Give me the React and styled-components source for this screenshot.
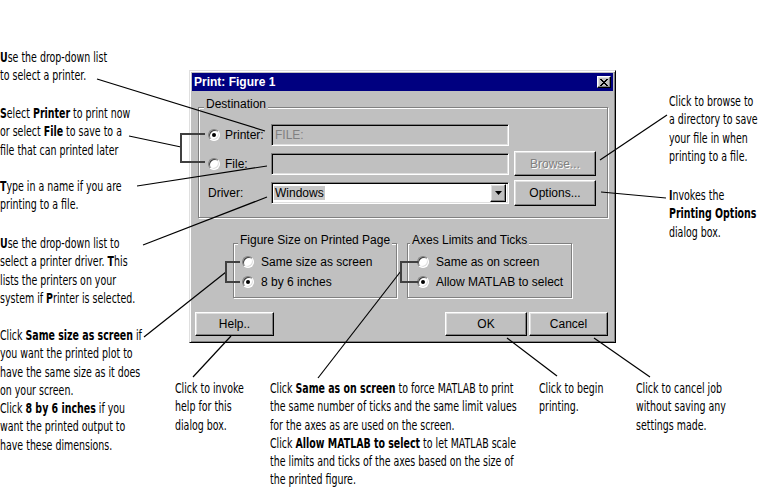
import React from "react";
import styled, { createGlobalStyle, css } from "styled-components";

const GlobalStyle = createGlobalStyle`
  html, body {
    margin: 0;
    padding: 0;
    background: #fff;
  }
`;

const raised = css`
  border: 1px solid;
  border-color: #fff #000 #000 #fff;
  box-shadow: inset -1px -1px #808080, inset 1px 1px #dfdfdf;
`;

const sunken = css`
  border: 1px solid;
  border-color: #808080 #fff #fff #808080;
  box-shadow: inset 1px 1px #000, inset -1px -1px #dfdfdf;
`;

const Page = styled.div`
  position: relative;
  width: 765px;
  height: 501px;
  box-sizing: border-box;
  padding: 70px 0 0 189px;
  overflow: hidden;
  background: #fff;
`;

const Window = styled.div`
  width: 427px;
  height: 273px;
  box-sizing: border-box;
  padding: 2px;
  display: flex;
  flex-direction: column;
  background: #c0c0c0;
  border: 1px solid;
  border-color: #dfdfdf #000 #000 #dfdfdf;
  box-shadow: inset 1px 1px #fff, inset -1px -1px #808080;
  font-family: "Liberation Sans", Arial, sans-serif;
  font-size: 12px;
  color: #000;
`;

const TitleBar = styled.div`
  height: 18px;
  flex: none;
  display: flex;
  align-items: center;
  justify-content: space-between;
  padding: 0 2px 0 2px;
  background: #000080;
  color: #fff;
  font-weight: bold;
  font-size: 12px;
`;

const CloseBox = styled.span`
  width: 14px;
  height: 12px;
  box-sizing: border-box;
  display: flex;
  align-items: center;
  justify-content: center;
  background: #c0c0c0;
  ${raised}
`;

const Body = styled.div`
  flex: 1;
  display: flex;
  flex-direction: column;
  padding: 16px 0 0 0;
`;

const Group = styled.div`
  display: flex;
  flex-direction: column;
  flex: none;
  min-width: 0;
  border: 1px solid #808080;
  box-shadow: inset 1px 1px #fff, 1px 1px #fff;
  padding: ${(p) => p.$pad};
  margin: ${(p) => p.$margin || "0"};
  width: ${(p) => (p.$width ? `${p.$width}px` : "auto")};
  box-sizing: border-box;
`;

const Legend = styled.div`
  align-self: flex-start;
  height: 14px;
  line-height: 14px;
  margin: -11px 0 0 ${(p) => p.$indent}px;
  padding: 0 2px;
  background: #c0c0c0;
  white-space: nowrap;
`;

const DestGrid = styled.div`
  display: grid;
  grid-template-columns: 63px 238px 87px;
  grid-auto-rows: 29px;
  align-items: center;
  margin-top: 9px;
`;

const Choice = styled.label`
  display: flex;
  align-items: center;
  gap: ${(p) => p.$gap || 5}px;
  height: 20px;
  white-space: nowrap;
`;

const Radio = styled.span`
  width: 12px;
  height: 12px;
  flex: none;
  box-sizing: border-box;
  border-radius: 50%;
  display: flex;
  align-items: center;
  justify-content: center;
  background: #fff;
  border: 1px solid;
  border-color: #808080 #fff #fff #808080;
  box-shadow: inset 1px 1px #404040, inset -1px -1px #dfdfdf;

  &::after {
    content: "";
    width: 4px;
    height: 4px;
    border-radius: 50%;
    background: ${(p) => (p.$checked ? "#000" : "transparent")};
  }
`;

const Field = styled.div`
  height: 22px;
  box-sizing: border-box;
  display: flex;
  align-items: center;
  padding: 0 3px;
  background: ${(p) => (p.$disabled ? "#c0c0c0" : "#fff")};
  color: ${(p) => (p.$disabled ? "#808080" : "#000")};
  ${sunken}
`;

const Combo = styled(Field)`
  padding: 0 2px 0 2px;
  justify-content: space-between;
`;

const Selected = styled.span`
  background: #c8c8c8;
  padding: 0 1px;
`;

const DropButton = styled.span`
  width: 16px;
  height: 18px;
  box-sizing: border-box;
  display: flex;
  align-items: center;
  justify-content: center;
  background: #c0c0c0;
  ${raised}
`;

const Button = styled.div`
  width: ${(p) => p.$width}px;
  height: ${(p) => p.$height || 24}px;
  box-sizing: border-box;
  display: flex;
  align-items: center;
  justify-content: center;
  justify-self: end;
  background: #c0c0c0;
  color: ${(p) => (p.$disabled ? "#808080" : "#000")};
  text-shadow: ${(p) => (p.$disabled ? "1px 1px #fff" : "none")};
  ${raised}
`;

const LowerRow = styled.div`
  display: flex;
  justify-content: center;
  gap: 10px;
  margin-top: 25px;
`;

const ChoiceList = styled.div`
  display: flex;
  flex-direction: column;
  margin-top: 5px;
`;

const ButtonRow = styled.div`
  display: flex;
  align-items: center;
  margin: 14px 5px 0 3px;
`;

const Spacer = styled.div`
  flex: 1;
`;

const ButtonPair = styled.div`
  display: flex;
  gap: 2px;
`;

/* callouts and leader lines of the figure */

const Note = styled.div`
  position: absolute;
  left: ${(p) => p.$x}px;
  top: ${(p) => p.$y}px;
  transform: scaleX(0.75);
  transform-origin: 0 0;
  font-family: "DejaVu Sans Condensed", "DejaVu Sans", sans-serif;
  font-size: 14px;
  line-height: 18.3px;
  color: #000;
  white-space: nowrap;

  b {
    font-weight: bold;
  }
`;

const Leaders = styled.svg`
  position: absolute;
  left: 0;
  top: 0;
  pointer-events: none;
`;

const lines = [
  [97, 79, 265, 131],
  [129, 136, 181, 147],
  [137, 186, 267, 166],
  [143, 245, 267, 197],
  [144, 337, 226, 272],
  [318, 378, 401, 271],
  [231, 336, 193, 377],
  [507, 338, 557, 376],
  [594, 338, 650, 377],
  [600, 160, 667, 115],
  [601, 192, 666, 198],
];

const brackets = [
  "M205 134 H181 V162 H205",
  "M240 262 H226 V282 H240",
  "M418 262 H401 V282 H418",
];

const App = () => (
  <Page>
    <GlobalStyle />
    <Window>
      <TitleBar>
        <span>Print: Figure 1</span>
        <CloseBox>
          <svg width="8" height="7" viewBox="0 0 8 7">
            <path d="M0 0 L7 7 M1 0 L8 7 M7 0 L0 7 M8 0 L1 7" stroke="#000" strokeWidth="1" />
          </svg>
        </CloseBox>
      </TitleBar>

      <Body>
        <Group $pad="0 11px 10px 9px" $margin="0 5px 0 6px">
          <Legend $indent={-4}>Destination</Legend>
          <DestGrid>
            <Choice>
              <Radio $checked />
              Printer:
            </Choice>
            <Field $disabled>FILE:</Field>
            <span />

            <Choice>
              <Radio />
              File:
            </Choice>
            <Field $disabled />
            <Button $width={82} $height={25} $disabled>
              Browse...
            </Button>

            <span>Driver:</span>
            <Combo>
              <Selected>Windows</Selected>
              <DropButton>
                <svg width="7" height="4" viewBox="0 0 7 4">
                  <path d="M0 0 H7 L3.5 4 Z" fill="#000" />
                </svg>
              </DropButton>
            </Combo>
            <Button $width={82} $height={26}>
              Options...
            </Button>
          </DestGrid>
        </Group>

        <LowerRow>
          <Group $pad="0 4px 5px 8px" $width={164}>
            <Legend $indent={-4}>Figure Size on Printed Page</Legend>
            <ChoiceList>
              <Choice $gap={7}>
                <Radio />
                Same size as screen
              </Choice>
              <Choice $gap={7}>
                <Radio $checked />
                8 by 6 inches
              </Choice>
            </ChoiceList>
          </Group>
          <Group $pad="0 4px 5px 9px" $width={165}>
            <Legend $indent={-7}>Axes Limits and Ticks</Legend>
            <ChoiceList>
              <Choice $gap={7}>
                <Radio />
                Same as on screen
              </Choice>
              <Choice $gap={7}>
                <Radio $checked />
                Allow MATLAB to select
              </Choice>
            </ChoiceList>
          </Group>
        </LowerRow>

        <ButtonRow>
          <Button $width={79}>Help..</Button>
          <Spacer />
          <ButtonPair>
            <Button $width={82}>OK</Button>
            <Button $width={79}>Cancel</Button>
          </ButtonPair>
        </ButtonRow>
      </Body>
    </Window>

    <Note $x={0} $y={48}>
      <b>U</b>se the drop-down list
      <br />
      to select a printer.
    </Note>
    <Note $x={0} $y={104}>
      <b>S</b>elect <b>Printer</b> to print now
      <br />
      or select <b>File</b> to save to a
      <br />
      file that can printed later
    </Note>
    <Note $x={0} $y={177}>
      <b>T</b>ype in a name if you are
      <br />
      printing to a file.
    </Note>
    <Note $x={0} $y={234}>
      <b>U</b>se the drop-down list to
      <br />
      select a printer driver. <b>T</b>his
      <br />
      lists the printers on your
      <br />
      system if <b>P</b>rinter is selected.
    </Note>
    <Note $x={0} $y={326}>
      Click <b>Same size as screen</b> if
      <br />
      you want the printed plot to
      <br />
      have the same size as it does
      <br />
      on your screen.
      <br />
      Click <b>8 by 6 inches</b> if you
      <br />
      want the printed output to
      <br />
      have these dimensions.
    </Note>
    <Note $x={175} $y={379}>
      Click to invoke
      <br />
      help for this
      <br />
      dialog box.
    </Note>
    <Note $x={270} $y={379}>
      Click <b>Same as on screen</b> to force MATLAB to print
      <br />
      the same number of ticks and the same limit values
      <br />
      for the axes as are used on the screen.
      <br />
      Click <b>Allow MATLAB to select</b> to let MATLAB scale
      <br />
      the limits and ticks of the axes based on the size of
      <br />
      the printed figure.
    </Note>
    <Note $x={539} $y={379}>
      Click to begin
      <br />
      printing.
    </Note>
    <Note $x={636} $y={379}>
      Click to cancel job
      <br />
      without saving any
      <br />
      settings made.
    </Note>
    <Note $x={669} $y={92}>
      Click to browse to
      <br />
      a directory to save
      <br />
      your file in when
      <br />
      printing to a file.
    </Note>
    <Note $x={669} $y={186}>
      <b>I</b>nvokes the
      <br />
      <b>Printing Options</b>
      <br />
      dialog box.
    </Note>

    <Leaders width="765" height="501" viewBox="0 0 765 501">
      {lines.map(([x1, y1, x2, y2], i) => (
        <line key={i} x1={x1} y1={y1} x2={x2} y2={y2} stroke="#000" strokeWidth="1.2" />
      ))}
      {brackets.map((d, i) => (
        <path key={i} d={d} fill="none" stroke="#404040" strokeWidth="2" />
      ))}
    </Leaders>
  </Page>
);

export default App;
